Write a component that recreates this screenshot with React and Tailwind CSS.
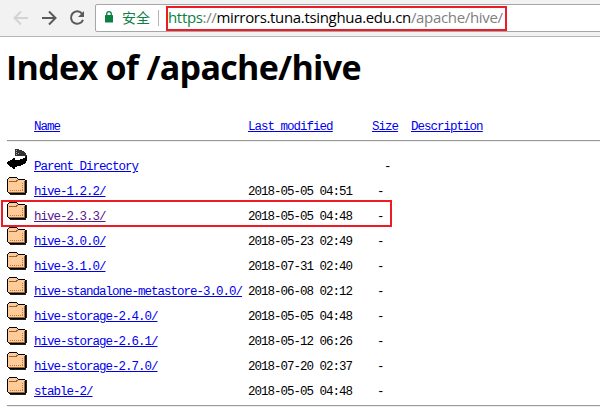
import React from "react";

const entries = [
  { name: "hive-1.2.2/", date: "2018-05-05 04:51" },
  { name: "hive-2.3.3/", date: "2018-05-05 04:48", visited: true },
  { name: "hive-3.0.0/", date: "2018-05-23 02:49" },
  { name: "hive-3.1.0/", date: "2018-07-31 02:40" },
  { name: "hive-standalone-metastore-3.0.0/", date: "2018-06-08 02:12" },
  { name: "hive-storage-2.4.0/", date: "2018-05-05 04:48" },
  { name: "hive-storage-2.6.1/", date: "2018-05-12 06:26" },
  { name: "hive-storage-2.7.0/", date: "2018-07-20 02:37" },
  { name: "stable-2/", date: "2018-05-05 04:48" },
];

function FolderIcon() {
  return (
    <svg className="block h-[22px] w-5 shrink-0" viewBox="0 0 20 22" shapeRendering="crispEdges">
      <path d="M2 20h16v-1h1V7h1v13h-1v2H3v-1H2z" fill="#222" />
      <path d="M0 6h1V5h1V4h8v1h1v1h7v1h1v13h-1v1H2v-1H1v-1H0z" fill="#000" />
      <path d="M1 6h1V5h8v1h1v1h7v12h-1v1H2v-1H1z" fill="#fc9" />
      <path d="M2 8h7V7h2v1h-1v1H2zM17 8h1v12H2v-1h15z" fill="#963" />
      <path d="M3 17.5h14M15.5 10v7" stroke="#b97a45" strokeDasharray="1 1" fill="none" />
    </svg>
  );
}

function BackIcon() {
  return (
    <svg className="block h-[22px] w-5 shrink-0" viewBox="0 0 20 22" shapeRendering="crispEdges">
      <path d="M8 1h4v1h3v1h2v1h1v1h1v2h1v2h-2V8H8z" fill="#333" />
      <path d="M9 2h1v1H9zM9 4h1v1H9zM9 6h1v1H9zM11 5h1v1h-1z" fill="#aaa" />
      <path d="M20 8v5h-1v2h-1v1h-2v1h-2v1h-4v1H8v2H6v-1H5v-1H3v-1H2v-1H1v-1H0v-2h1v-1h2v-1h2v-1h1v-1h2v2h5v-1h3v-1h2V9h1V8z" fill="#000" />
    </svg>
  );
}

function Row({ icon, name, date, size, visited }) {
  return (
    <div className="flex h-[25px]">
      {icon}
      <div className="mt-3 ml-[7px] flex">
        <span className="w-[214px]">
          <a className={visited ? "text-[#551a8b] underline" : "text-[#0000ee] underline"}>{name}</a>
        </span>
        <span className="w-[104px]">{date}</span>
        <span className={date ? "ml-[25px]" : "ml-[32px]"}>{size}</span>
      </div>
    </div>
  );
}

export default function App() {
  return (
    <div className="relative h-[407px] w-[600px] overflow-hidden bg-white text-black">
      <header className="flex h-[37px] items-start border-b border-[#b5b5b5] bg-[#f2f2f2]">
        <svg className="mt-[10px] ml-[13px] h-4 w-4 shrink-0" viewBox="0 0 16 16" fill="none" stroke="#d3d3d5" strokeWidth="2">
          <path d="M15 8H2M8 1.5L1.5 8L8 14.5" />
        </svg>
        <svg className="mt-[10px] ml-[12px] h-4 w-4 shrink-0" viewBox="0 0 16 16" fill="none" stroke="#5a5a5e" strokeWidth="2">
          <path d="M1 8h13M8 1.5L14.5 8L8 14.5" />
        </svg>
        <svg className="mt-[10px] ml-[12px] h-4 w-4 shrink-0" viewBox="0 0 16 16" fill="none" stroke="#5a5a5e" strokeWidth="2">
          <path d="M13 3.6A6.2 6.2 0 1 0 14 9.8" />
          <path d="M15 1v6H9z" fill="#5a5a5e" stroke="none" />
        </svg>
        <div className="mt-1 -mr-2 ml-[10px] flex h-7 flex-1 items-center rounded-[2px] border border-[#a6a6a6] bg-white font-['Open_Sans','Noto_Sans_CJK_SC',sans-serif] text-[15px]">
          <svg className="-mt-[2px] ml-[9px] h-3 w-2 shrink-0" viewBox="0 0 8 12">
            <path d="M1.7 6V3a2.3 2.3 0 0 1 4.6 0v3" fill="none" stroke="#0b8043" strokeWidth="1.3" />
            <rect y="4" width="8" height="7.5" rx="0.6" fill="#0b8043" />
          </svg>
          <span className="-mt-px ml-[9px] w-[28px] text-[14px] text-[#0b8043]">安全</span>
          <span className="ml-[8px] h-4 w-px bg-[#b5b5b5]" />
          <div className="ml-[7px] flex h-[25px] w-[341px] shrink-0 items-center border-2 border-[#ed1c24] whitespace-nowrap">
            <span className="-mt-[2px] tracking-[-0.33px]">
              <span className="text-[#0b8043]">https</span>
              <span className="text-[#808080]">://</span>
              mirrors.tuna.tsinghua.edu.cn
              <span className="text-[#808080]">/apache/hive/</span>
            </span>
          </div>
        </div>
      </header>

      <main className="pl-[7px]">
        <h1 className="-ml-px flex h-[60px] items-center font-['Open_Sans',sans-serif] text-[34px] font-bold tracking-[-0.7px] whitespace-nowrap">
          Index of /apache/hive
        </h1>
        <div className="mt-[23px] font-['Liberation_Mono',monospace] text-[12.5px] leading-[15px] tracking-[-1px] whitespace-nowrap">
          <div className="flex h-5 items-start pl-[27px] text-[#0000ee] underline">
            <a className="w-[26px]">Name</a>
            <a className="ml-[188px] w-[85px]">Last modified</a>
            <a className="ml-[39px] w-[26px]">Size</a>
            <a className="ml-[13px]">Description</a>
          </div>
          <div className="h-[2px] border-t border-[#9a9a9a] bg-[#eeeeee]" />
          <div className="mt-[6px]">
            <Row icon={<BackIcon />} name="Parent Directory" size="-" />
            {entries.map((e) => (
              <Row key={e.name} icon={<FolderIcon />} name={e.name} date={e.date} visited={e.visited} size="-" />
            ))}
          </div>
          <div className="mt-[7px] h-[2px] border-t border-[#9a9a9a] bg-[#eeeeee]" />
        </div>
      </main>
      <div className="absolute top-[200px] left-[1px] h-[27px] w-[391px] border-2 border-[#ed1c24]" />
    </div>
  );
}
